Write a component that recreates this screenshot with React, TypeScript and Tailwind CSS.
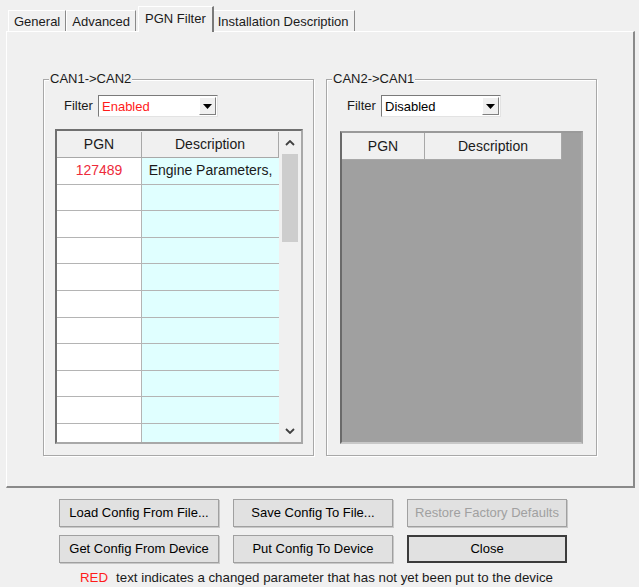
import React from "react";

const font = "font-['Liberation_Sans','Arial',sans-serif]";

function Tab({ label, active }: { label: string; active?: boolean }) {
  if (active) {
    return (
      <div className="relative z-10 -mx-[2px] -mb-[1px] flex h-[26px] items-start border-l border-t border-white border-r-2 border-r-[#7a7a7a] bg-[#f0f0f0] px-[6px] pt-[2px]">
        {label}
      </div>
    );
  }
  return (
    <div className="flex h-[21px] items-start border-l border-t border-white border-r border-r-[#8a8a8a] px-[5px] pt-[1px]">
      {label}
    </div>
  );
}

function Combo({ value, red }: { value: string; red?: boolean }) {
  return (
    <div className="flex h-[22px] w-[120px] border border-t-[#7a7a7a] border-l-[#7a7a7a] border-r-[#e3e3e3] border-b-[#e3e3e3] bg-white">
      <div className={`flex-1 pl-[3px] pt-[3px] leading-[15px] ${red ? "text-[#ff1a1a]" : "text-black"}`}>
        {value}
      </div>
      <div className="m-[1px] flex w-[17px] items-center justify-center border border-t-white border-l-white border-r-[#808080] border-b-[#808080] bg-[#f0f0f0]">
        <svg width="9" height="5" viewBox="0 0 9 5">
          <path d="M0 0h9L4.5 5z" fill="#000" />
        </svg>
      </div>
    </div>
  );
}

function GroupBox({ title, children }: { title: string; children: React.ReactNode }) {
  return (
    <div className="relative h-[377px] w-[271px] border border-[#a8a8a8] shadow-[inset_1px_1px_0_#fff,1px_1px_0_#fff]">
      <div className="absolute -top-[9px] left-[5px] bg-[#f0f0f0] px-[1px] leading-[16px]">{title}</div>
      {children}
    </div>
  );
}

function Chevron({ up }: { up?: boolean }) {
  return (
    <svg width="10" height="6" viewBox="0 0 10 6">
      <path
        d={up ? "M1 5L5 1l4 4" : "M1 1l4 4 4-4"}
        fill="none"
        stroke="#404040"
        strokeWidth="1.8"
      />
    </svg>
  );
}

function LeftGrid() {
  const rows = Array.from({ length: 11 }, (_, i) => i);
  return (
    <div className="flex h-[315px] w-[248px] overflow-hidden border-2 border-t-[#707070] border-l-[#707070] border-r-[#a8a8a8] border-b-[#a8a8a8] bg-white text-[14px]">
      <div className="w-[222px]">
        <div className="flex h-[27px] bg-[#f0f0f0] pt-[1px]">
          <div className="flex w-[85px] items-center justify-center border-b border-r border-[#a8a8a8]">PGN</div>
          <div className="flex w-[137px] items-center justify-center border-b border-r border-[#a8a8a8]">Description</div>
        </div>
        {rows.map((i) => (
          <div key={i} className="flex h-[26.6px] border-b border-[#b4b4b4]">
            <div className="flex w-[85px] items-center justify-center border-r border-[#b4b4b4] bg-white text-[#ee2b3b]">
              {i === 0 ? "127489" : ""}
            </div>
            <div className="flex w-[137px] items-center justify-center bg-[#e0ffff]">
              {i === 0 ? "Engine Parameters," : ""}
            </div>
          </div>
        ))}
      </div>
      <div className="flex w-[22px] flex-col bg-[#f0f0f0]">
        <div className="flex h-[23px] items-center justify-center">
          <Chevron up />
        </div>
        <div className="mx-[3px] h-[88px] bg-[#cdcdcd]" />
        <div className="flex-1" />
        <div className="flex h-[22px] items-center justify-center">
          <Chevron />
        </div>
      </div>
    </div>
  );
}

function RightGrid() {
  return (
    <div className="h-[313px] w-[243px] border-2 border-t-[#9a9a9a] border-l-[#6a6a6a] border-r-[#a8a8a8] border-b-[#c8c8c8] bg-[#a0a0a0] text-[14px]">
      <div className="flex h-[27px]">
        <div className="flex w-[83px] items-center justify-center border-b border-r border-[#a8a8a8] bg-[#f0f0f0]">PGN</div>
        <div className="flex w-[137px] items-center justify-center border-b border-r border-[#a8a8a8] bg-[#f0f0f0]">Description</div>
      </div>
    </div>
  );
}

function Btn({ label, disabled, def }: { label: string; disabled?: boolean; def?: boolean }) {
  return (
    <div
      className={`flex h-[28px] w-[160px] items-center justify-center bg-[#e1e1e1] ${
        def ? "border-2 border-[#3c3c3c]" : "border border-[#a0a0a0] shadow-[1px_1px_0_#c8c8c8]"
      } ${disabled ? "text-[#a0a0a0]" : "text-black"}`}
    >
      {label}
    </div>
  );
}

export default function App() {
  return (
    <div className={`h-[587px] w-[639px] overflow-hidden bg-[#f0f0f0] text-[13px] text-[#1a1a1a] ${font}`}>
      <div className="flex h-[31px] items-end pl-[8px]">
        <Tab label="General" />
        <Tab label="Advanced" />
        <div className="w-[4px]" />
        <Tab label="PGN Filter" active />
        <Tab label="Installation Description" />
      </div>
      <div className="ml-[6px] h-[457px] w-[629px] border-l border-t border-white border-r-2 border-b-2 border-r-[#8a8a8a] border-b-[#8a8a8a]">
        <div className="flex gap-[12px] pl-[36px] pt-[47px]">
          <GroupBox title="CAN1->CAN2">
            <div className="flex items-center pl-[20px] pt-[15px]">
              <span className="w-[34px]">Filter</span>
              <Combo value="Enabled" red />
            </div>
            <div className="ml-[11px] mt-[12px]">
              <LeftGrid />
            </div>
          </GroupBox>
          <GroupBox title="CAN2->CAN1">
            <div className="flex items-center pl-[20px] pt-[15px]">
              <span className="w-[34px]">Filter</span>
              <Combo value="Disabled" />
            </div>
            <div className="ml-[13px] mt-[14px]">
              <RightGrid />
            </div>
          </GroupBox>
        </div>
      </div>
      <div className="grid w-fit grid-cols-3 gap-x-[14px] gap-y-[8px] pl-[59px] pt-[11px]">
        <Btn label="Load Config From File..." />
        <Btn label="Save Config To File..." />
        <Btn label="Restore Factory Defaults" disabled />
        <Btn label="Get Config From Device" />
        <Btn label="Put Config To Device" />
        <Btn label="Close" def />
      </div>
      <div className="pl-[80px] pt-[5px] text-[13.3px]">
        <span className="text-[#ff1a1a]">RED</span>
        <span className="ml-[8px]">text indicates a changed parameter that has not yet been put to the device</span>
      </div>
    </div>
  );
}
